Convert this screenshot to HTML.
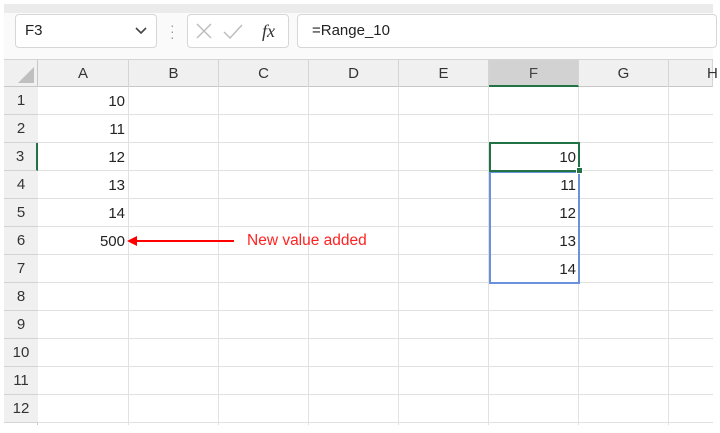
<!DOCTYPE html>
<html><head><meta charset="utf-8"><style>
*{margin:0;padding:0;box-sizing:border-box}
body{width:720px;height:433px;background:#fff;position:relative;overflow:hidden;font-family:"Liberation Sans",sans-serif;color:#222}
.a{position:absolute}
.box{position:absolute;background:#fff;border:1px solid #d6d6d6;border-radius:4px}
.ch{position:absolute;top:60px;height:27px;line-height:27px;text-align:center;font-size:15px;color:#333;border-right:1px solid #d4d4d4}
.rh{position:absolute;left:4px;width:34px;height:28px;line-height:28px;text-align:center;font-size:15px;color:#333;border-bottom:1px solid #d4d4d4;background:#f0f0f0}
.hl{position:absolute;left:38px;width:675px;height:1px;background:#e1e1e1}
.vl{position:absolute;top:87px;height:338px;width:1px;background:#e1e1e1}
.n{position:absolute;font-size:15px;text-align:right;width:80px;color:#222}
</style></head><body>
<div class="a" style="left:4px;top:4px;width:709px;height:9px;background:#ebebeb"></div>
<div class="a" style="left:4px;top:13px;width:709px;height:47px;background:#fafafa"></div>
<div class="box" style="left:15px;top:14px;width:142px;height:34px"></div>
<div class="a" style="left:25px;top:22px;font-size:15px">F3</div>
<svg class="a" style="left:134px;top:26px" width="14" height="10"><path d="M2 2 L7 7 L12 2" stroke="#444" stroke-width="1.6" fill="none"/></svg>
<div class="a" style="left:170px;top:22px;color:#999;font-size:14px;line-height:6px">·<br>·<br>·</div>
<div class="box" style="left:187px;top:14px;width:102px;height:34px"></div>
<svg class="a" style="left:194px;top:21px" width="90" height="22"><path d="M3 3 L17 17 M17 3 L3 17" stroke="#bbb" stroke-width="1.4"/><path d="M30 11 L36 17 L48 4" stroke="#bbb" stroke-width="1.4" fill="none"/><text x="68" y="16" font-family="Liberation Serif" font-style="italic" font-size="18" fill="#333">fx</text></svg>
<div class="box" style="left:297px;top:14px;width:420px;height:34px"></div>
<div class="a" style="left:312px;top:22px;font-size:15px">=Range_10</div>
<div class="a" style="left:4px;top:59px;width:709px;height:28px;background:#f0f0f0;border-top:1px solid #d4d4d4;border-bottom:1px solid #c8c8c8"></div>
<svg class="a" style="left:17px;top:66px" width="18" height="18"><path d="M17 1 L17 17 L1 17 Z" fill="#bfbfbf"/></svg>
<div class="ch" style="left:4px;width:34px;border-right:1px solid #c8c8c8"></div>
<div class="ch" style="left:38px;width:91px">A</div>
<div class="ch" style="left:129px;width:90px">B</div>
<div class="ch" style="left:219px;width:90px">C</div>
<div class="ch" style="left:309px;width:90px">D</div>
<div class="ch" style="left:399px;width:90px">E</div>
<div class="ch" style="left:489px;width:90px;background:#d2d2d2;border-bottom:2px solid #217346;color:#444">F</div>
<div class="ch" style="left:579px;width:90px">G</div>
<div class="ch" style="left:669px;width:44px;text-align:left;padding-left:38px">H</div>
<div class="a" style="left:37px;top:87px;width:1px;height:338px;background:#c8c8c8"></div>
<div class="rh" style="top:87px">1</div><div class="rh" style="top:115px">2</div>
<div class="rh" style="top:143px;border-right:2px solid #217346">3</div>
<div class="rh" style="top:171px">4</div><div class="rh" style="top:199px">5</div>
<div class="rh" style="top:227px">6</div><div class="rh" style="top:255px">7</div>
<div class="rh" style="top:283px">8</div><div class="rh" style="top:311px">9</div>
<div class="rh" style="top:339px">10</div><div class="rh" style="top:367px">11</div>
<div class="rh" style="top:395px">12</div>
<div class="hl" style="top:114px"></div><div class="hl" style="top:142px"></div><div class="hl" style="top:170px"></div><div class="hl" style="top:198px"></div><div class="hl" style="top:226px"></div><div class="hl" style="top:254px"></div><div class="hl" style="top:282px"></div><div class="hl" style="top:310px"></div><div class="hl" style="top:338px"></div><div class="hl" style="top:366px"></div><div class="hl" style="top:394px"></div><div class="hl" style="top:422px"></div>
<div class="vl" style="left:128px"></div><div class="vl" style="left:218px"></div><div class="vl" style="left:308px"></div><div class="vl" style="left:398px"></div><div class="vl" style="left:488px"></div><div class="vl" style="left:578px"></div><div class="vl" style="left:668px"></div>
<div class="n" style="left:45px;top:93px">10</div>
<div class="n" style="left:45px;top:121px">11</div>
<div class="n" style="left:45px;top:149px">12</div>
<div class="n" style="left:45px;top:177px">13</div>
<div class="n" style="left:45px;top:205px">14</div>
<div class="n" style="left:45px;top:233px">500</div>
<div class="a" style="left:489px;top:171px;width:91px;height:113px;border:2px solid #6a92dc"></div>
<div class="a" style="left:489px;top:142px;width:91px;height:30px;border:2px solid #217346"></div>
<div class="a" style="left:576px;top:167px;width:7px;height:7px;background:#217346;border:1px solid #fff"></div>
<div class="n" style="left:496px;top:149px">10</div>
<div class="n" style="left:496px;top:177px">11</div>
<div class="n" style="left:496px;top:205px">12</div>
<div class="n" style="left:496px;top:233px">13</div>
<div class="n" style="left:496px;top:261px">14</div>
<svg class="a" style="left:126px;top:234px" width="110" height="14"><path d="M10 7 L108 7" stroke="#f00" stroke-width="2"/><path d="M1 7 L11 2 L11 12 Z" fill="#f00"/></svg>
<div class="a" style="left:247px;top:232px;font-size:15.5px;color:#f22">New value added</div>
</body></html>
